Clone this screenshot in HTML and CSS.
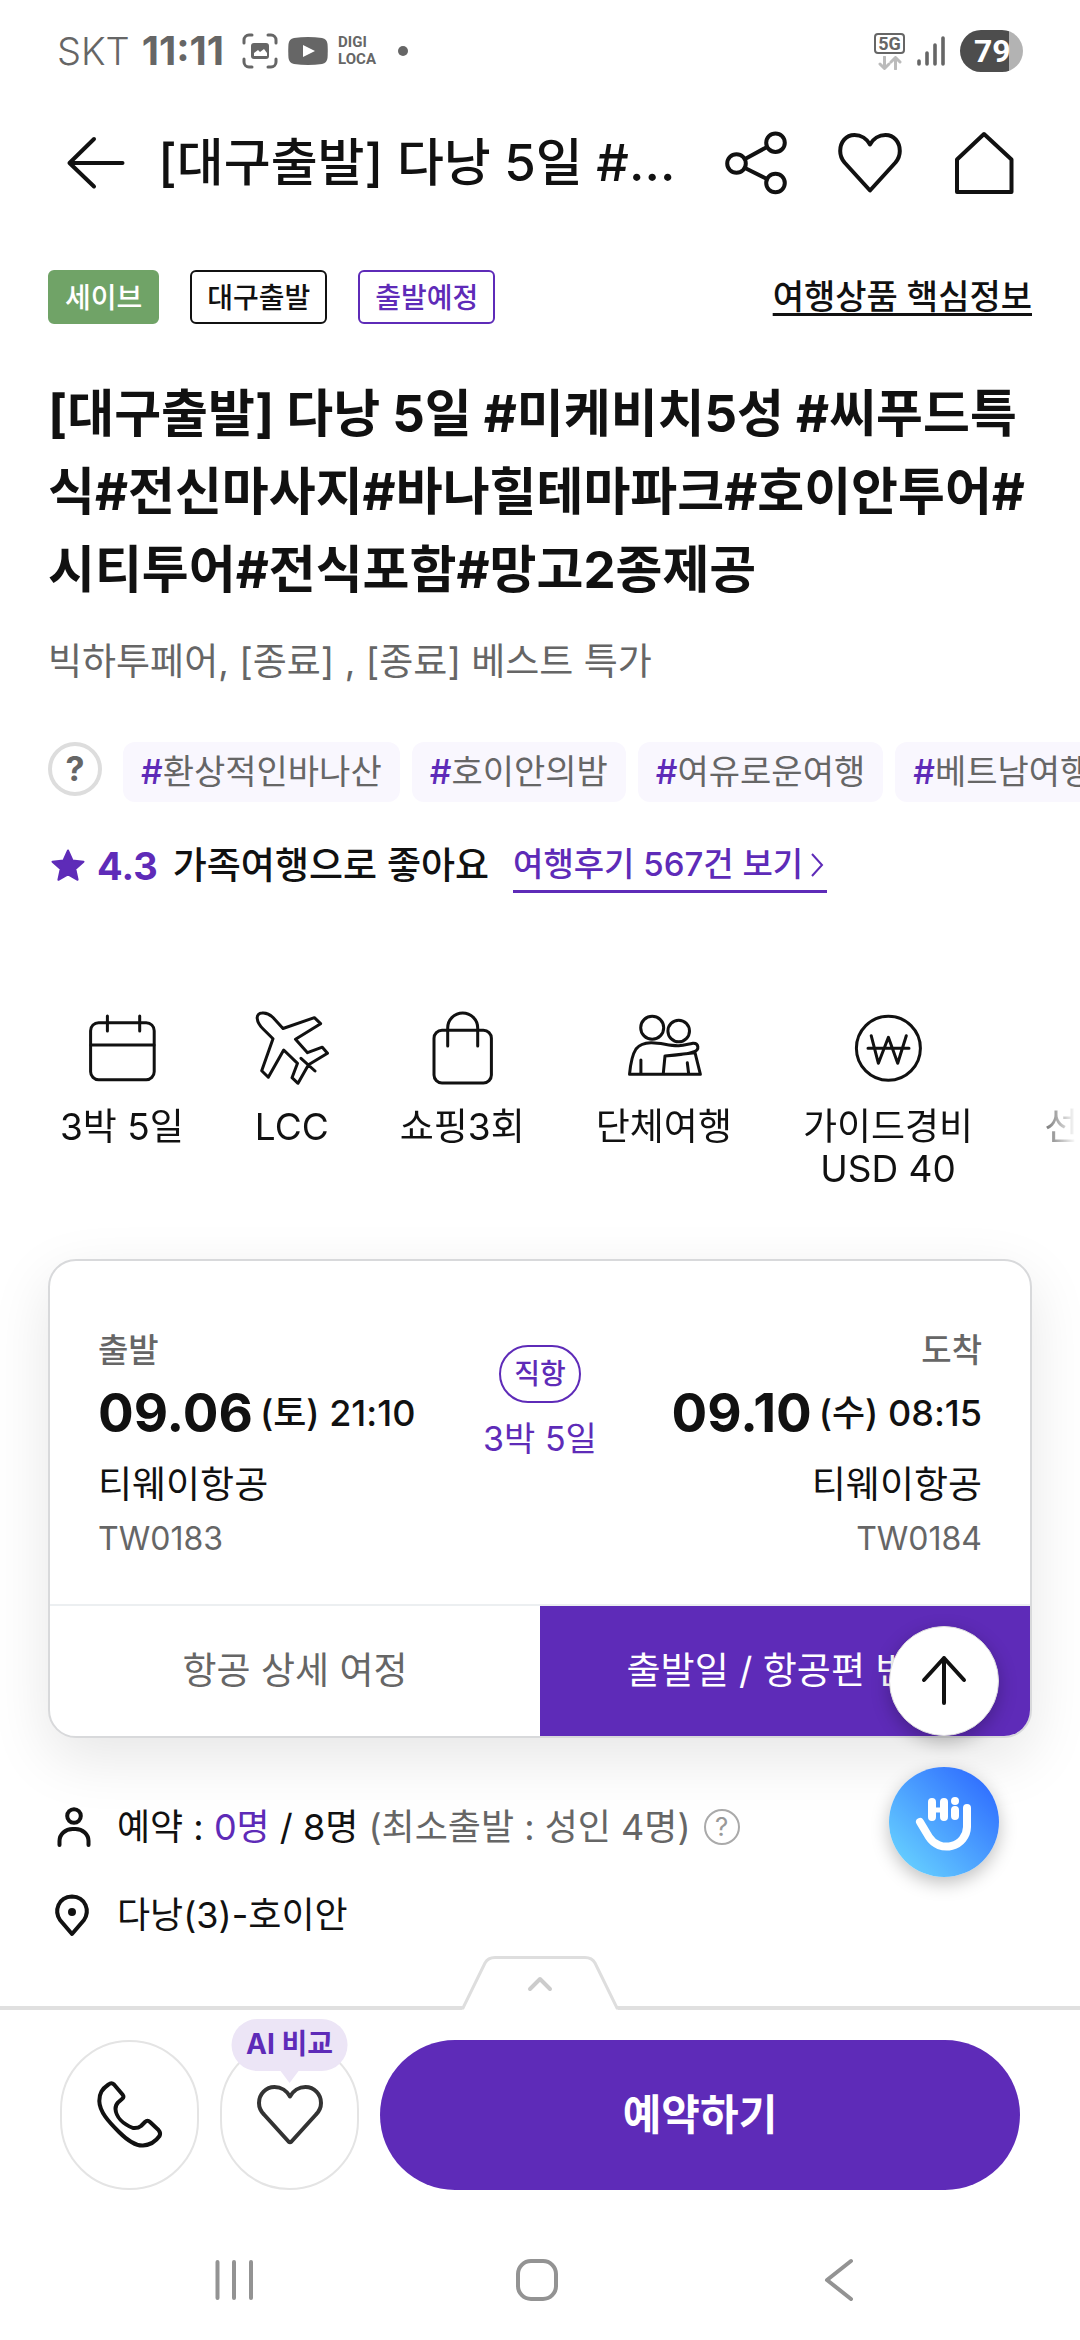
FILE: index.html
```html
<!DOCTYPE html>
<html lang="ko">
<head>
<meta charset="utf-8">
<meta name="viewport" content="width=device-width, initial-scale=1">
<title>[대구출발] 다낭 5일</title>
<link rel="stylesheet" href="styles.css">
</head>
<body>
<div class="status">
  <span class="carrier">SKT</span>
  <span class="clock">11:11</span>
  <svg class="st-capture" width="36" height="36" viewBox="0 0 36 36" fill="none" stroke="#666" stroke-width="3" stroke-linecap="round"><path d="M2 10V7a5 5 0 0 1 5-5h3M26 2h3a5 5 0 0 1 5 5v3M34 26v3a5 5 0 0 1-5 5h-3M10 34H7a5 5 0 0 1-5-5v-3"/><rect x="9" y="10" width="18" height="16" rx="3" fill="#666" stroke="none"/><path d="M12 23v-3l4-3 2 2 4-3 3 4v3z" fill="#fff" stroke="none"/></svg>
  <svg class="st-video" width="40" height="28" viewBox="0 0 40 28"><path d="M6 1Q20-1 34 1Q39 2 39.500 7Q40 14 39.500 21Q39 26 34 27Q20 29 6 27Q1 26 .5 21Q0 14 .5 7Q1 2 6 1z" fill="#666"/><path d="M15 8l12 6-12 6z" fill="#fff"/></svg>
  <span class="digi">DIGI<br>LOCA</span>
  <span class="dot"></span>
  <span class="net"><span class="net-box">5G</span><svg width="24" height="14" viewBox="0 0 24 14" fill="none" stroke="#bbb" stroke-width="3" stroke-linecap="round" stroke-linejoin="round"><path d="M6.500 1v11M2 8l4.500 4.500L11 8M17.500 13V2M13 6l4.500-4.500L22 6"/></svg></span>
  <svg class="signal" width="28" height="32" viewBox="0 0 28 32" stroke="#666" stroke-width="3.600" stroke-linecap="round"><path d="M2 26v3M10 18v11M18 10v19M26 3v26"/></svg>
  <span class="battery">79</span>
</div>

<header class="topbar">
  <button class="icon-btn" aria-label="뒤로"><svg width="72" height="72" viewBox="0 0 72 72" class="line heavy"><path d="M9.500 36H62.500M34 12L9.500 36L34 59.500"/></svg></button>
  <div class="topbar-title">[대구출발] 다낭 5일 #미케비치5성</div>
  <button class="icon-btn" aria-label="공유"><svg width="72" height="72" viewBox="0 0 72 72" class="line heavy"><circle cx="16.500" cy="36.500" r="9.300"/><circle cx="55.500" cy="15.700" r="9.300"/><circle cx="55.500" cy="56" r="9.300"/><path d="M25 32L47 20M25 41L47 52"/></svg></button>
  <button class="icon-btn" aria-label="찜"><svg width="72" height="72" viewBox="0 0 72 72" class="line heavy"><path d="M36 17.500C33 12 27 8 20.500 8C12 8 6.200 15 6.200 24C6.200 29 8 32.500 10.500 35.500L36 63.500L61.500 35.500C64 32.500 65.800 29 65.800 24C65.800 15 60 8 51.500 8C45 8 39 12 36 17.500Z"/></svg></button>
  <button class="icon-btn" aria-label="홈"><svg width="72" height="72" viewBox="0 0 72 72" class="line heavy"><path d="M36 7L63.500 32.500V65H9V32.500Z"/></svg></button>
</header>

<main class="content">
  <div class="tags">
    <span class="tag tag-save">세이브</span>
    <span class="tag">대구출발</span>
    <span class="tag tag-plan">출발예정</span>
    <a class="key-info" href="#info">여행상품 핵심정보</a>
  </div>

  <h1 class="title">[대구출발] 다낭 5일 #미케비치5성 #씨푸드특식#전신마사지#바나힐테마파크#호이안투어#시티투어#전식포함#망고2종제공</h1>
  <p class="subtitle">빅하투페어, [종료] , [종료] 베스트 특가</p>

  <div class="chips">
    <button class="help" aria-label="도움말">?</button>
    <a class="chip" href="#t1"><b>#</b>환상적인바나산</a>
    <a class="chip" href="#t2"><b>#</b>호이안의밤</a>
    <a class="chip" href="#t3"><b>#</b>여유로운여행</a>
    <a class="chip" href="#t4"><b>#</b>베트남여행</a>
  </div>

  <div class="rating">
    <svg width="38" height="36" viewBox="0 0 38 36"><path d="M20 2.500l4.500 10 11 1.200-8.200 7.300 2.300 10.800L20 26.300 10.400 31.800l2.300-10.800L4.500 13.700l11-1.200z" fill="#5e2bb8" stroke="#5e2bb8" stroke-width="2" stroke-linejoin="round"/></svg>
    <strong class="score">4.3</strong>
    <span class="rate-text">가족여행으로 좋아요</span>
    <a class="reviews" href="#reviews">여행후기 567건 보기<svg width="18" height="24" viewBox="0 0 18 24" fill="none" stroke="#5e2bb8" stroke-width="2"><path d="M3 1l10 11L3 23"/></svg></a>
  </div>

  <ul class="facts">
    <li><svg width="80" height="80" viewBox="0 0 80 80" class="line"><rect x="8.600" y="14.700" width="63.600" height="57" rx="8"/><path d="M9 37H72M25.400 8V23M57.700 8V23"/></svg>3박 5일</li>
    <li><svg width="80" height="80" viewBox="0 0 80 80" class="line"><path d="M10 5C14 4.500 18 6.500 21 9.500L31 20.500L62.400 9.700L68.600 15.700L43.500 31.300L55.500 44.700L70.300 39.200L75.500 45.300L56.500 56.700L46 75.300L40 69.700L45.500 55.300L31.700 42L16.300 69.300L9.700 62.700L21 30.700L11.400 21.300C8 18 5.500 13.500 5.200 10.300C5 7 7 5 10 5ZM49 50.300L63 63"/></svg>LCC</li>
    <li><svg width="80" height="80" viewBox="0 0 80 80" class="line"><rect x="12" y="22.300" width="57.400" height="52.700" rx="8"/><path d="M25.700 38V20a15 15 0 0 1 30 0V38"/></svg>쇼핑3회</li>
    <li><svg width="80" height="80" viewBox="0 0 80 80" class="line"><circle cx="28.200" cy="19.700" r="11.500"/><circle cx="54.700" cy="23" r="10.800"/><path d="M41 48L39.200 66.300M71 44.700L76.400 66.300H5.500C6.500 56 8 47 12 41C15 37 19 35 27 34.700C37 34.500 45 38 54.700 37.700C61 37.500 64 36 69 35.300C75 35 75.500 42 70.200 43.700C62 47 52 47.500 41 48ZM16.900 52V66M63.300 54.700L64.700 66"/></svg>단체여행</li>
    <li><svg width="80" height="80" viewBox="0 0 80 80" class="line"><circle cx="40.400" cy="40.300" r="32"/><path d="M23.200 27.700L30.400 55.300L40.400 29.300L49.700 55.300L58.300 27.700M20 40.300H61"/></svg>가이드경비<br>USD 40</li>
    <li><svg width="80" height="80" viewBox="0 0 80 80" class="line"><path d="M16 42L34 60L66 24"/></svg>선택관광</li>
  </ul>

  <section class="card">
    <div class="trip">
      <div class="leg">
        <span class="leg-label">출발</span>
        <span class="leg-date"><strong>09.06</strong><span>(토) 21:10</span></span>
        <span class="leg-air">티웨이항공</span>
        <span class="leg-no">TW0183</span>
      </div>
      <div class="mid">
        <span class="direct">직항</span>
        <span>3박 5일</span>
      </div>
      <div class="leg leg-right">
        <span class="leg-label">도착</span>
        <span class="leg-date"><strong>09.10</strong><span>(수) 08:15</span></span>
        <span class="leg-air">티웨이항공</span>
        <span class="leg-no">TW0184</span>
      </div>
    </div>
    <div class="card-actions">
      <button class="act">항공 상세 여정</button>
      <button class="act act-main">출발일 / 항공편 변경</button>
    </div>
  </section>

  <div class="info-row">
    <svg width="48" height="48" viewBox="0 0 48 48" class="line mid-w"><circle cx="26" cy="13" r="6.800"/><path d="M11.500 42V38a13 12 0 0 1 13-12h3a13 12 0 0 1 13 12V42"/></svg>
    <span>예약 : <em>0명</em> / 8명 <span class="muted">(최소출발 : 성인 4명)</span></span>
    <button class="help-sm" aria-label="예약 안내">?</button>
  </div>
  <div class="info-row">
    <svg width="48" height="48" viewBox="0 0 48 48" class="line mid-w"><path d="M24 43L12 29C6 20 10 6 24 5.500C38 6 42 20 36 29Z"/><circle cx="24" cy="21" r="2" fill="#111"/></svg>
    <span>다낭(3)-호이안</span>
  </div>
</main>

<footer class="bottom">
  <button class="pull" aria-label="펼치기"><svg width="160" height="60" viewBox="0 0 160 60" fill="none"><path d="M2 60L25 13Q28 7 35 7H125Q132 7 135 13L158 60z" fill="#fff"/><path d="M0 58H3L25 13Q28 7.500 35 7.500H125Q132 7.500 135 13L157 58H160" stroke="#dedede" stroke-width="3"/><path d="M70 39L80 29L90 39" stroke="#ccc" stroke-width="4" stroke-linecap="round" stroke-linejoin="round"/></svg></button>
  <div class="actions">
    <button class="round" aria-label="전화"><svg width="72" height="72" viewBox="0 0 72 72" class="line mid-w"><path d="M14.500 5.500C8 10 5.300 14 5.300 22C5.500 33 15 43 25 53C33 61 41 67 49 66.500C56 66 62 62 65.500 57Q67 54 64.500 51L56 43Q53.500 40.500 51 43L47 47Q44 49.500 39 49C29 45 22 38 21.500 30Q21.500 26 24 23.500L28 20Q30.500 18 28.500 15.500L20 5.500Q17.500 3 14.500 5.500Z"/></svg></button>
    <button class="round" aria-label="AI 비교 찜"><svg width="72" height="72" viewBox="0 0 72 72" class="line heavy soft"><path d="M36 17.500C33 12 27 8 20.500 8C12 8 5 15 5 24C5 29 7 32.500 10 35.500L34.500 62.500Q36 64 37.500 62.500L62 35.500C65 32.500 67 29 67 24C67 15 60 8 51.500 8C45 8 39 12 36 17.500Z"/></svg><span class="bubble">AI 비교</span></button>
    <button class="reserve">예약하기</button>
  </div>
  <nav class="sysnav">
    <button aria-label="최근 앱"><svg width="48" height="48" viewBox="0 0 48 48"><path d="M7.500 6V42M24 6V42M41 6V42"/></svg></button>
    <button aria-label="홈 화면"><svg width="48" height="48" viewBox="0 0 48 48"><rect x="5" y="5" width="38" height="38" rx="13"/></svg></button>
    <button aria-label="이전"><svg width="48" height="48" viewBox="0 0 48 48"><path d="M36 5L12 24L36 43"/></svg></button>
  </nav>
</footer>

<div class="floats">
  <button class="to-top" aria-label="맨 위로"><svg width="108" height="108" viewBox="0 0 108 108" class="line heavy"><path d="M54 76V31M34 53L54 31L74 53"/></svg></button>
  <button class="chat" aria-label="Hi 채팅 상담"><svg width="110" height="110" viewBox="0 0 110 110" fill="none" stroke="#fff" stroke-width="8" stroke-linecap="round" stroke-linejoin="round"><path d="M43 35V50M55 35V50M66 43V49"/><path d="M43 43H55" stroke-width="5"/><circle cx="66" cy="34" r="4" fill="#fff" stroke="none"/><path d="M78 41V60A20.500 20 0 0 1 40 70L31 55"/></svg></button>
</div>
</body>
</html>
```
FILE: styles.css
```css
* {
  box-sizing: border-box;
}

body {
  margin: 0;
  min-height: 100vh;
  display: flex;
  flex-direction: column;
  background: #fff;
  color: #111;
  font-family: Inter, "Noto Sans CJK KR", sans-serif;
  font-size: 37px;
  line-height: 54px;
  overflow-x: hidden;
}

button {
  padding: 0;
  border: 0;
  background: none;
  color: inherit;
  font: inherit;
}

a {
  color: inherit;
  text-decoration: none;
}

svg {
  display: block;
  flex: none;
}

.line {
  fill: none;
  stroke: #111;
  stroke-width: 3;
  stroke-linecap: round;
  stroke-linejoin: round;
}

.mid-w {
  stroke-width: 4;
}

.heavy {
  stroke-width: 4;
}

.soft {
  stroke: #333;
}

/* Status bar */
.status {
  display: flex;
  align-items: center;
  height: 102px;
  padding: 0 57px;
  color: #666;
}

.carrier {
  font-size: 38px;
  font-weight: 300;
}

.clock {
  margin-left: 12px;
  font-size: 40px;
  font-weight: 700;
}

.st-capture {
  margin-left: 18px;
}

.st-video {
  margin-left: 10px;
}

.digi {
  margin-left: 10px;
  font-family: Roboto, sans-serif;
  font-size: 15px;
  font-weight: 700;
  line-height: 17px;
}

.dot {
  width: 10px;
  height: 10px;
  margin-left: 22px;
  border-radius: 50%;
  background: #666;
}

.net {
  display: flex;
  flex-direction: column;
  align-items: center;
  gap: 2px;
  margin-left: auto;
}

.net-box {
  width: 31px;
  height: 21px;
  border: 2px solid #666;
  border-radius: 4px;
  font-family: Roboto, sans-serif;
  font-size: 18px;
  font-weight: 700;
  line-height: 17px;
  text-align: center;
}

.signal {
  margin-left: 12px;
}

.battery {
  width: 63px;
  height: 42px;
  margin-left: 15px;
  padding-left: 14px;
  border-radius: 21px;
  background: linear-gradient(to right, #4d4d4d 49px, #b3b3b3 49px);
  color: #fff;
  font-family: Roboto, sans-serif;
  font-size: 32px;
  font-weight: 700;
  line-height: 42px;
}

/* Top bar */
.topbar {
  display: flex;
  align-items: center;
  gap: 42px;
  height: 121px;
  padding: 0 60px;
}

.topbar-title {
  flex: 1;
  min-width: 0;
  margin-left: -16px;
  overflow: hidden;
  font-size: 51px;
  font-weight: 500;
  line-height: 72px;
  text-overflow: ellipsis;
  white-space: nowrap;
}

/* Product heading */
.content {
  flex: 1;
  padding: 47px 48px 0;
}

.tags {
  display: flex;
  align-items: center;
  gap: 31px;
}

.tag {
  height: 54px;
  padding: 0 15px;
  border: 2px solid #111;
  border-radius: 6px;
  font-size: 28px;
  font-weight: 500;
  line-height: 52px;
}

.tag-save {
  border-color: #70a367;
  background: #70a367;
  color: #fff;
}

.tag-plan {
  border-color: #5e2bb8;
  color: #5e2bb8;
}

.key-info {
  margin-left: auto;
  font-size: 34px;
  font-weight: 500;
  text-decoration: underline;
  text-decoration-thickness: 3px;
  text-underline-offset: 4px;
}

.title {
  margin: 51px 0 0;
  font-size: 51px;
  font-weight: 700;
  line-height: 78px;
  word-break: break-all;
}

.subtitle {
  margin: 26px 0 0;
  color: #666;
}

.chips {
  display: flex;
  gap: 12px;
  margin: 53px -48px 0 0;
  overflow: hidden;
}

.help {
  flex: none;
  width: 54px;
  height: 54px;
  margin-right: 9px;
  border: 4px solid #ddd;
  border-radius: 50%;
  color: #666;
  font-size: 34px;
  font-weight: 700;
  line-height: 46px;
}

.chip {
  flex: none;
  height: 60px;
  padding: 0 18px;
  border-radius: 12px;
  background: #f9f7fe;
  color: #666;
  font-size: 34px;
  line-height: 59px;
}

.chip b {
  color: #5e2bb8;
  font-weight: 500;
}

.rating {
  display: flex;
  align-items: center;
  margin-top: 37px;
}

.score {
  margin-left: 11px;
  color: #5e2bb8;
  font-size: 38px;
}

.rate-text {
  margin-left: 15px;
  font-weight: 500;
}

.reviews {
  display: flex;
  align-items: center;
  gap: 6px;
  margin-left: 24px;
  border-bottom: 3px solid #5e2bb8;
  color: #5e2bb8;
  font-size: 33px;
  font-weight: 500;
  line-height: 51px;
}

/* Trip facts */
.facts {
  display: flex;
  gap: 71px;
  margin: 115px -44px 0 0;
  padding: 0 0 0 12px;
  overflow: hidden;
  list-style: none;
  line-height: 42px;
  text-align: center;
  white-space: nowrap;
  -webkit-mask-image: linear-gradient(to left, transparent, #000 54px);
  mask-image: linear-gradient(to left, transparent, #000 54px);
}

.facts li {
  display: flex;
  flex: none;
  flex-direction: column;
  align-items: center;
}

.facts svg {
  margin: 0 -4px 18px;
}

/* Flight card */
.card {
  margin-top: 69px;
  overflow: hidden;
  border: 2px solid #d8d9db;
  border-radius: 28px;
  background: #fff;
  box-shadow: 0 20px 60px rgba(0, 0, 0, 0.1);
}

.trip {
  display: grid;
  grid-template-columns: 1fr auto 1fr;
  padding: 62px 48px 38px;
}

.leg {
  display: flex;
  flex-direction: column;
  align-items: flex-start;
}

.leg-right {
  align-items: flex-end;
}

.leg-label {
  color: #666;
  font-size: 33px;
  font-weight: 500;
}

.leg-date {
  display: flex;
  align-items: center;
  gap: 7px;
  margin-top: 3px;
  font-size: 36px;
  font-weight: 500;
  line-height: 66px;
  white-space: nowrap;
}

.leg-date strong {
  font-size: 53px;
}

.leg-air {
  margin-top: 12px;
}

.leg-no {
  color: #666;
  font-size: 32px;
}

.mid {
  display: flex;
  flex-direction: column;
  align-items: center;
  padding-top: 22px;
  color: #5e2bb8;
  font-size: 34px;
}

.direct {
  height: 58px;
  margin-bottom: 9px;
  padding: 0 13px;
  border: 2px solid #5e2bb8;
  border-radius: 29px;
  font-size: 28px;
  font-weight: 500;
  line-height: 54px;
}

.card-actions {
  display: flex;
  border-top: 2px solid #eceff1;
}

.act {
  flex: 1;
  height: 130px;
  color: #666;
}

.act-main {
  background: #5e2bb8;
  color: #fff;
}

/* Booking info */
.info-row {
  display: flex;
  align-items: center;
  gap: 21px;
  margin-top: 34px;
  font-size: 36px;
}

.card + .info-row {
  margin-top: 62px;
}

.info-row em {
  color: #5e2bb8;
  font-style: normal;
}

.muted {
  color: #666;
}

.help-sm {
  width: 36px;
  height: 36px;
  margin-left: -8px;
  border: 2px solid #aaa;
  border-radius: 50%;
  color: #999;
  font-size: 26px;
  line-height: 32px;
}

/* Bottom bar */
.bottom {
  position: sticky;
  bottom: 0;
  border-top: 4px solid #e0e0e0;
  background: #fff;
}

.pull {
  position: absolute;
  bottom: 100%;
  left: 50%;
  transform: translateX(-50%);
}

.actions {
  display: flex;
  gap: 21px;
  padding: 30px 60px 0;
}

.round {
  position: relative;
  display: grid;
  place-items: center;
  width: 139px;
  height: 150px;
  border: 2px solid #e4e4e4;
  border-radius: 75px;
}

.bubble {
  position: absolute;
  top: -23px;
  left: 50%;
  height: 52px;
  padding: 0 15px;
  border-radius: 26px;
  background: #ece5f6;
  color: #5e2bb8;
  font-size: 28px;
  font-weight: 700;
  line-height: 50px;
  white-space: nowrap;
  transform: translateX(-50%);
}

.bubble::after {
  content: "";
  position: absolute;
  top: 100%;
  left: 50%;
  border: 9px solid transparent;
  border-top: 12px solid #ece5f6;
  border-bottom: 0;
  transform: translateX(-50%);
}

.reserve {
  flex: 1;
  border-radius: 75px;
  background: #5e2bb8;
  color: #fff;
  font-size: 42px;
  font-weight: 700;
}

.sysnav {
  display: flex;
  align-items: center;
  justify-content: space-between;
  height: 120px;
  margin-top: 30px;
  padding: 0 217px 0 210px;
}

.sysnav svg {
  fill: none;
  stroke: #939393;
  stroke-width: 4;
  stroke-linecap: round;
  stroke-linejoin: round;
}

/* Floating buttons */
.floats {
  position: fixed;
  right: 81px;
  bottom: 463px;
  display: grid;
  gap: 31px;
}

.to-top,
.chat {
  width: 110px;
  height: 110px;
  border-radius: 50%;
  box-shadow: 0 6px 18px rgba(0, 0, 0, 0.25);
}

.to-top {
  border: 1px solid #ddd;
  background: #fff;
}

.chat {
  background: linear-gradient(to top right, #66d0ff 10%, #2f6dff 90%);
}
```
